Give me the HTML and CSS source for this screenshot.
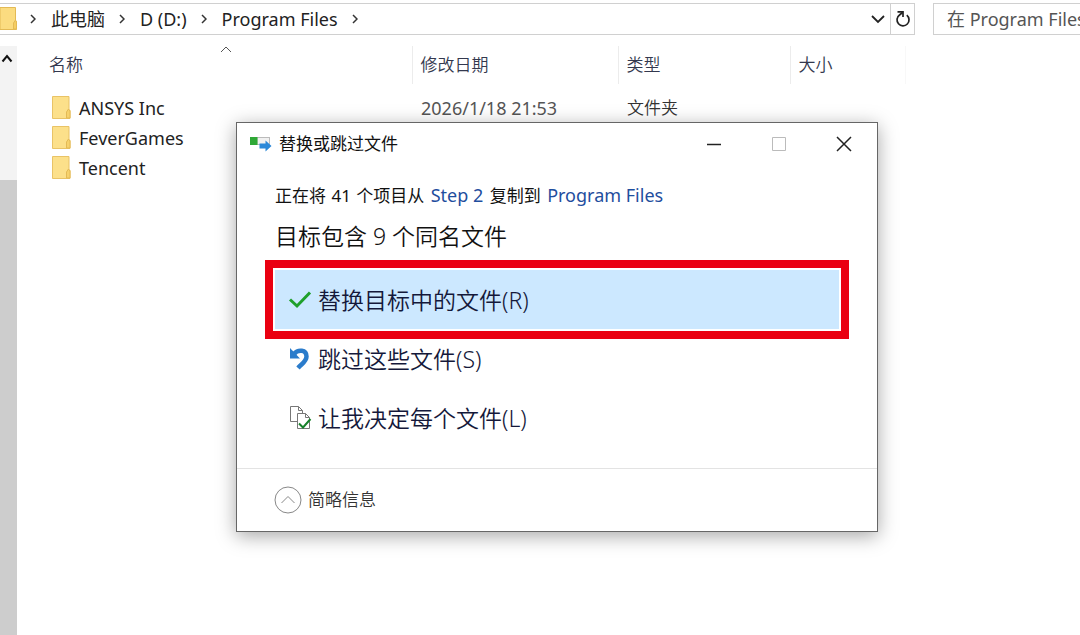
FILE: index.html
```html
<!DOCTYPE html>
<html lang="zh-CN">
<head>
  <meta charset="UTF-8">
  <meta name="viewport" content="width=device-width, initial-scale=1.0">
  <title>Program Files</title>
  <link rel="stylesheet" href="styles.css">
</head>
<body>
  <header class="toolbar">
    <nav class="address">
      <svg class="address-folder" width="17" height="24" viewBox="0 0 17 24">
        <path d="M0 .5h15.500v13l1 1v8H0z" fill="#fbdc80" stroke="#e3ba55"/>
        <path d="M13.500 22v-6l2-3 1 2v7z" fill="#f5cd63" stroke="#e3ba55"/>
      </svg>
      <svg class="crumb-arrow" width="6" height="10" viewBox="0 0 6 10"><path d="M1 1l4 4-4 4"/></svg>
      <a href="#" class="crumb">此电脑</a>
      <svg class="crumb-arrow" width="6" height="10" viewBox="0 0 6 10"><path d="M1 1l4 4-4 4"/></svg>
      <a href="#" class="crumb">D (D:)</a>
      <svg class="crumb-arrow" width="6" height="10" viewBox="0 0 6 10"><path d="M1 1l4 4-4 4"/></svg>
      <a href="#" class="crumb">Program Files</a>
      <svg class="crumb-arrow" width="6" height="10" viewBox="0 0 6 10"><path d="M1 1l4 4-4 4"/></svg>
      <button type="button" class="address-button history" aria-label="历史记录">
        <svg width="14" height="9" viewBox="0 0 14 9"><path d="M1 1l6 6 6-6" fill="none" stroke="#222" stroke-width="1.800"/></svg>
      </button>
      <button type="button" class="address-button refresh" aria-label="刷新">
        <svg width="16" height="18" viewBox="0 0 16 18" fill="none" stroke="#222" stroke-width="1.700">
          <path d="M11.800 5.200A6 6 0 1 1 4.500 5L7.500 2.500"/>
          <path d="M2.500 1.800h5.500v5.200"/>
        </svg>
      </button>
    </nav>
    <input type="text" class="search" aria-label="搜索" placeholder="在 Program Files 中搜索">
  </header>

  <main class="content">
    <div class="scrollbar">
      <div class="scrollbar-track">
        <svg width="12" height="9" viewBox="0 0 12 9"><path d="M1.500 7.500L6 2l4.500 5.500" fill="none" stroke="#111" stroke-width="2"/></svg>
      </div>
      <div class="scrollbar-thumb"></div>
    </div>

    <table class="files">
      <colgroup>
        <col class="col-name">
        <col class="col-date">
        <col class="col-type">
        <col class="col-size">
        <col>
      </colgroup>
      <thead>
        <tr>
          <th>
            名称
            <svg class="sort" width="12" height="7" viewBox="0 0 12 7"><path d="M1 6l5-5 5 5" fill="none" stroke="#555"/></svg>
          </th>
          <th>修改日期</th>
          <th>类型</th>
          <th>大小</th>
          <th></th>
        </tr>
      </thead>
      <tbody>
        <tr>
          <td>
            <div class="file-name">
              <svg width="19" height="24" viewBox="0 0 19 24">
                <path d="M.5.5h16.500v13l1 1v8H.5z" fill="#fce08a" stroke="#e9c366"/>
                <path d="M14.500 22v-6l2-3 1.500 2v7z" fill="#f7d26c" stroke="#e3ba55"/>
              </svg>
              ANSYS Inc
            </div>
          </td>
          <td class="file-date">2026/1/18 21:53</td>
          <td>文件夹</td>
          <td></td>
          <td></td>
        </tr>
        <tr>
          <td>
            <div class="file-name">
              <svg width="19" height="24" viewBox="0 0 19 24">
                <path d="M.5.5h16.500v13l1 1v8H.5z" fill="#fce08a" stroke="#e9c366"/>
                <path d="M14.500 22v-6l2-3 1.500 2v7z" fill="#f7d26c" stroke="#e3ba55"/>
              </svg>
              FeverGames
            </div>
          </td>
          <td></td>
          <td></td>
          <td></td>
          <td></td>
        </tr>
        <tr>
          <td>
            <div class="file-name">
              <svg width="19" height="24" viewBox="0 0 19 24">
                <path d="M.5.5h16.500v13l1 1v8H.5z" fill="#fce08a" stroke="#e9c366"/>
                <path d="M14.500 22v-6l2-3 1.500 2v7z" fill="#f7d26c" stroke="#e3ba55"/>
              </svg>
              Tencent
            </div>
          </td>
          <td></td>
          <td></td>
          <td></td>
          <td></td>
        </tr>
      </tbody>
    </table>
  </main>

  <section class="dialog" role="dialog" aria-labelledby="dialog-title">
    <div class="titlebar">
      <svg width="22" height="16" viewBox="0 0 22 16">
        <rect x="7" y="1.500" width="12.500" height="7" fill="#f1f1f1" stroke="#bbb"/>
        <rect x="0" y="1" width="7.500" height="8" fill="#2fa836"/>
        <path d="M9.500 7.500h6V4.500l6 5.500-6 5.500v-3h-6z" fill="#2b88d8"/>
      </svg>
      <h1 class="title" id="dialog-title">替换或跳过文件</h1>
      <button type="button" class="window-button" aria-label="最小化">
        <svg width="16" height="16" viewBox="0 0 16 16"><path d="M1 8.500h14" stroke="#222" stroke-width="1.500"/></svg>
      </button>
      <button type="button" class="window-button" aria-label="最大化" disabled>
        <svg width="16" height="16" viewBox="0 0 16 16"><path d="M1.500 1.500h13v13h-13z" fill="none" stroke="#bbb"/></svg>
      </button>
      <button type="button" class="window-button" aria-label="关闭">
        <svg width="16" height="16" viewBox="0 0 16 16"><path d="M1 1l14 14M15 1L1 15" stroke="#222" stroke-width="1.500"/></svg>
      </button>
    </div>

    <div class="dialog-body">
      <p class="status">正在将 <span class="count">41</span> 个项目从 <a href="#">Step 2</a> 复制到 <a href="#">Program Files</a></p>
      <h2 class="heading">目标包含 9 个同名文件</h2>

      <div class="options">
        <button type="button" class="option selected">
          <svg width="24" height="24" viewBox="0 0 24 24"><path d="M2 11.500l7 6.500L22 4.500" fill="none" stroke="#1fa02b" stroke-width="3"/></svg>
          替换目标中的文件(R)
        </button>
        <button type="button" class="option">
          <svg width="24" height="24" viewBox="0 0 24 24">
            <path d="M6 7C10 2 18.500 2.500 18.500 9.500c0 5-4.500 7-8.500 11.500" fill="none" stroke="#2b7ccb" stroke-width="4.500"/>
            <path d="M2 1v10.500h10z" fill="#2b7ccb"/>
          </svg>
          跳过这些文件(S)
        </button>
        <button type="button" class="option">
          <svg width="24" height="24" viewBox="0 0 24 24" fill="#fff" stroke="#777">
            <path d="M2.500.5h8l4 4v11h-12z"/>
            <path d="M10.500.5v4h4" fill="none"/>
            <path d="M9.500 7.500h8l4 4v11h-12z"/>
            <path d="M17.500 7.500v4h4" fill="none"/>
            <path d="M11 17.500l4 4 7.500-8.500" fill="none" stroke="#17812a" stroke-width="2"/>
          </svg>
          让我决定每个文件(L)
        </button>
      </div>
    </div>

    <footer class="dialog-footer">
      <button type="button" class="details">
        <svg width="28" height="28" viewBox="0 0 28 28" fill="none" stroke="#888">
          <circle cx="14" cy="14" r="13"/>
          <path d="M7.500 17l6.500-6.500 6.500 6.500"/>
        </svg>
        简略信息
      </button>
    </footer>
  </section>
</body>
</html>
```

FILE: styles.css
```css
* {
  box-sizing: border-box;
}

body {
  margin: 0;
  min-height: 100vh;
  display: flex;
  flex-direction: column;
  position: relative;
  overflow: hidden;
  background-color: #fff;
  color: #222;
  font-family: "Noto Sans", "Noto Sans CJK SC", sans-serif;
  font-size: 17px;
  line-height: 24px;
}

button {
  padding: 0;
  border: none;
  background: none;
  color: inherit;
  font: inherit;
}

svg {
  display: block;
  flex: none;
}

a {
  text-decoration: none;
}

/* Address bar and search */
.toolbar {
  display: flex;
  gap: 18px;
  padding-top: 3px;
}

.address {
  flex: 1;
  display: flex;
  align-items: center;
  height: 32px;
  border: 1px solid #d0d0d0;
  border-left: none;
}

.address-folder {
  margin-right: 13px;
}

.crumb {
  margin: 0 14px 0 15px;
  color: #222;
  font-size: 18px;
}

.crumb-arrow {
  fill: none;
  stroke: #333;
  stroke-width: 1.5;
}

.address-button {
  display: flex;
  align-items: center;
  justify-content: center;
  width: 24px;
  height: 30px;
}

.history {
  margin-left: auto;
}

.refresh {
  border-left: 1px solid #d0d0d0;
}

.search {
  width: 147px;
  height: 32px;
  padding: 0 0 0 13px;
  border: 1px solid #d0d0d0;
  border-right: none;
  border-radius: 0;
  font: inherit;
  font-size: 18px;
}

.search::placeholder {
  color: #555;
}

/* File list */
.content {
  flex: 1;
  display: flex;
  gap: 24px;
  padding-top: 11px;
}

.scrollbar {
  display: flex;
  flex-direction: column;
  width: 17px;
}

.scrollbar-track {
  height: 134px;
  padding: 8px 0 0 1px;
  background-color: #f3f3f3;
}

.scrollbar-thumb {
  flex: 1;
  background-color: #cdcdcd;
}

.files {
  flex: 1;
  align-self: flex-start;
  table-layout: fixed;
  border-collapse: collapse;
  color: #333;
}

.col-name {
  width: 371px;
}

.col-date {
  width: 206px;
}

.col-type {
  width: 172px;
}

.col-size {
  width: 115px;
}

.files th {
  position: relative;
  height: 38px;
  padding: 0 8px;
  border-right: 1px solid #ececec;
  color: #33384e;
  font-weight: 350;
  text-align: left;
}

.files th:nth-last-child(2) {
  border-right-color: #f8f8f8;
}

.files th:last-child {
  border-right: none;
}

.sort {
  position: absolute;
  top: 0;
  left: 50%;
  transform: translateX(-50%);
}

.files td {
  height: 30px;
  padding: 0 9px;
  font-weight: 350;
}

.files td.file-date {
  color: #555;
  font-size: 18px;
  font-weight: 400;
}

.files tbody::before {
  content: "";
  display: block;
  height: 9px;
}

.file-name {
  display: flex;
  align-items: center;
  gap: 8px;
  padding-left: 2px;
  color: #222;
  font-size: 18px;
  font-weight: 400;
}

/* Replace or skip dialog */
.dialog {
  position: absolute;
  top: 122px;
  left: 236px;
  width: 642px;
  border: 1px solid #666;
  background-color: #fff;
  box-shadow: 0 4px 18px rgba(0, 0, 0, 0.35);
}

.titlebar {
  display: flex;
  align-items: center;
  height: 42px;
  padding: 0 1px 0 13px;
}

.title {
  flex: 1;
  margin: 0;
  padding-left: 7px;
  color: #111;
  font-size: 17px;
  font-weight: 400;
}

.window-button {
  display: flex;
  align-items: center;
  justify-content: center;
  width: 65px;
  height: 40px;
}

.dialog-body {
  padding: 18px 38px 21px;
  color: #111;
}

.status {
  margin: 0 0 12px;
}

.count {
  margin: 0 1px;
}

.status a {
  margin: 0 2px;
  color: #1f4e9e;
  font-size: 18px;
}

.heading {
  margin: 0 0 18px;
  font-size: 23px;
  font-weight: 350;
  line-height: 32px;
}

.option {
  display: flex;
  align-items: center;
  gap: 6px;
  width: 100%;
  height: 59px;
  padding-left: 13px;
  color: #14183a;
  font-size: 23px;
  font-weight: 350;
  text-align: left;
}

.option.selected {
  background-color: #cce8ff;
  outline: 8px solid #ea0011;
  outline-offset: 2px;
}

.dialog-footer {
  padding: 17px 37px;
  border-top: 1px solid #e3e3e3;
}

.details {
  display: flex;
  align-items: center;
  gap: 6px;
  color: #333;
  font-weight: 350;
}
```
